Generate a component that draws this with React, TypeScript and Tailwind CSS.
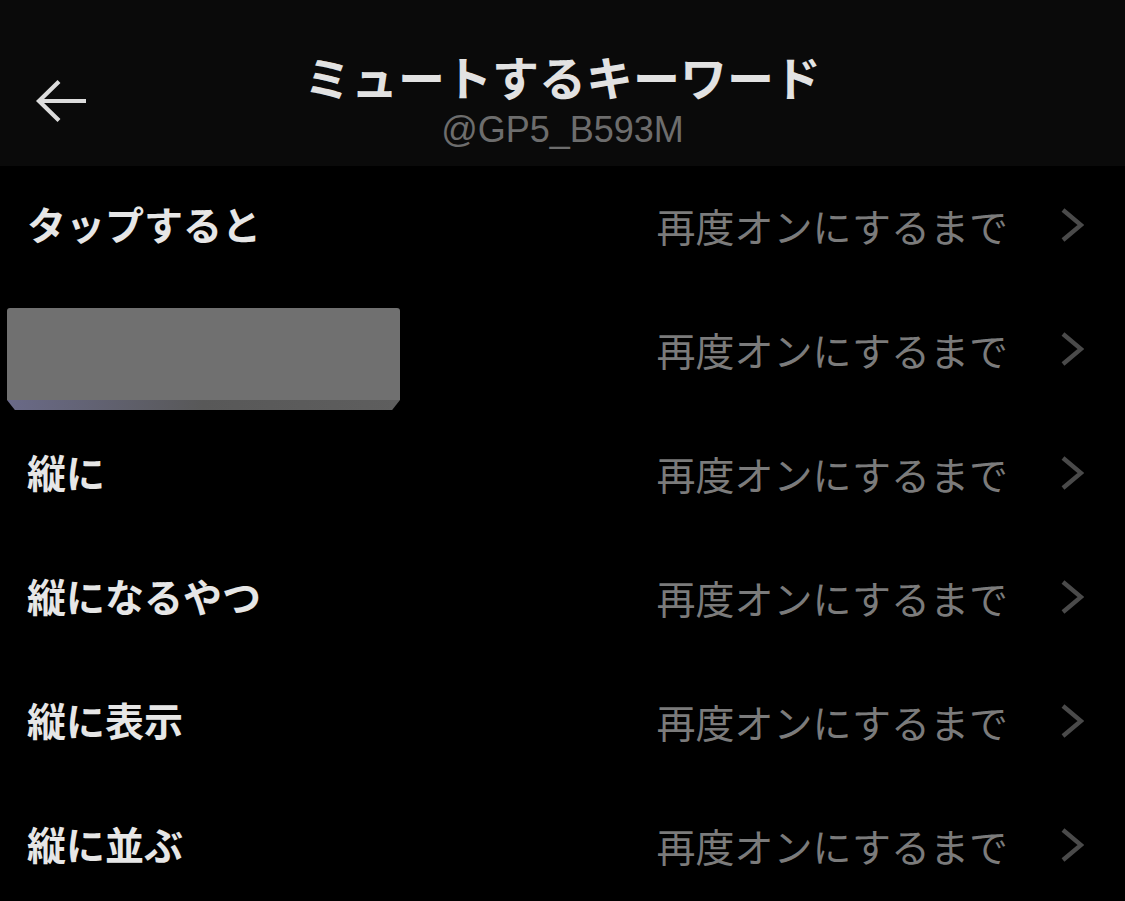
import React from "react";

const ROWS: (string | null)[] = ["タップすると", null, "縦に", "縦になるやつ", "縦に表示", "縦に並ぶ"];

function BackArrow() {
  return (
    <svg viewBox="0 0 52 44" className="h-[44px] w-[52px]" fill="none" stroke="#dcdcdc" strokeWidth="4.2" strokeLinecap="butt" strokeLinejoin="miter">
      <path d="M51 22 H4" />
      <path d="M24 2.5 L4 22 L24 41.5" />
    </svg>
  );
}

function Chevron() {
  return (
    <svg viewBox="0 0 24 34" className="h-[34px] w-[24px]" fill="none" stroke="#4a4a4a" strokeWidth="4.4">
      <path d="M3 2 L21 17 L3 32" />
    </svg>
  );
}

export default function App() {
  return (
    <div
      className="h-[901px] w-[1125px] overflow-hidden bg-black"
      style={{ fontFamily: '"Noto Sans CJK JP", "Noto Sans", sans-serif' }}
    >
      <header className="grid h-[166px] grid-cols-[140px_1fr_140px] bg-[#0a0a0a]">
        <div className="flex items-start pl-[35px] pt-[79px]">
          <BackArrow />
        </div>
        <div className="flex flex-col items-center pt-[47px]">
          <h1 className="text-[47px] font-bold leading-[58px] text-[#e2e2e2]">
            ミュートするキーワード
          </h1>
          <p
            className="mt-[4px] text-[36px] leading-[42px] text-[#6d6d6d]"
            style={{ fontFamily: '"Liberation Sans", Arial, sans-serif' }}
          >
            @GP5_B593M
          </p>
        </div>
        <div />
      </header>

      <ul>
        {ROWS.map((label, i) => (
          <li key={i} className="flex h-[124px] items-center justify-between pb-[10px] pr-[41px]">
            {label ? (
              <span className="pl-[27px] text-[39px] font-bold text-[#e6e6e6]">{label}</span>
            ) : (
              <div className="ml-[7px] mt-[24px] flex h-[102px] w-[393px] flex-col overflow-hidden rounded-[3px]">
                <div className="flex-1 bg-[#707070]" />
                <div className="h-[10px] bg-gradient-to-r from-[#6a6a88] via-[#585858] to-[#5e5e5e] [clip-path:polygon(0_0,100%_0,98%_100%,2%_100%)]" />
              </div>
            )}
            <div className="flex items-center gap-[52px] pt-[4px]">
              <span className="text-[39px] text-[#7b7b7b]">再度オンにするまで</span>
              <Chevron />
            </div>
          </li>
        ))}
      </ul>
    </div>
  );
}
